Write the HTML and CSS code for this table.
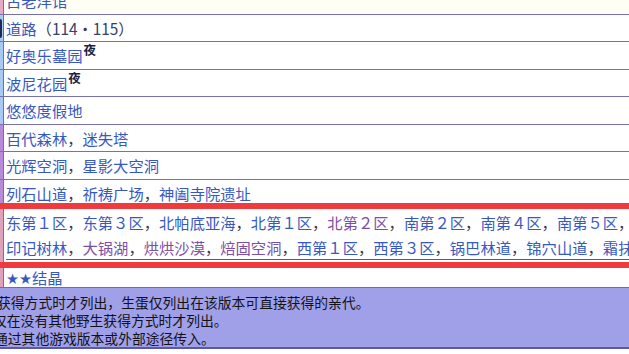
FILE: index.html
```html
<!DOCTYPE html>
<html lang="zh">
<head>
<meta charset="utf-8">
<title>地点</title>
<link rel="stylesheet" href="styles.css">
</head>
<body>
<div class="page">
  <div class="table">
    <div class="row row-top">
      <div class="strip strip-pink"></div>
      <div class="cell"><a class="lk">古老洋馆</a></div>
    </div>
    <div class="row">
      <div class="strip strip-blue"><div class="mark"></div></div>
      <div class="cell"><a class="lk">道路</a><span class="plain">（</span><a class="lk num">114</a><span class="plain">・</span><a class="lk num">115</a><span class="plain">）</span></div>
    </div>
    <div class="row">
      <div class="strip strip-blue"></div>
      <div class="cell"><a class="lk">好奥乐墓园</a><sup class="night">夜</sup></div>
    </div>
    <div class="row">
      <div class="strip strip-blue"></div>
      <div class="cell"><a class="lk">波尼花园</a><sup class="night">夜</sup></div>
    </div>
    <div class="row">
      <div class="strip strip-blue"></div>
      <div class="cell"><a class="lk">悠悠度假地</a></div>
    </div>
    <div class="row">
      <div class="strip strip-purple"></div>
      <div class="cell"><a class="lk">百代森林</a><span class="sep">，</span><a class="lk">迷失塔</a></div>
    </div>
    <div class="row">
      <div class="strip strip-purple"></div>
      <div class="cell"><a class="lk">光辉空洞</a><span class="sep">，</span><a class="lk">星影大空洞</a></div>
    </div>
    <div class="row row-short">
      <div class="strip strip-purple"></div>
      <div class="cell"><a class="lk">列石山道</a><span class="sep">，</span><a class="lk">祈祷广场</a><span class="sep">，</span><a class="lk">神阖寺院遗址</a></div>
    </div>
    <div class="highlight">
      <div class="row row-hl">
        <div class="strip strip-rose"></div>
        <div class="cell cell-hl">
          <div class="lines">
            <div class="line"><a class="lk">东第１区</a><span class="sep">，</span><a class="lk">东第３区</a><span class="sep">，</span><a class="lk">北帕底亚海</a><span class="sep">，</span><a class="lk">北第１区</a><span class="sep">，</span><a class="lk vis">北第２区</a><span class="sep">，</span><a class="lk">南第２区</a><span class="sep">，</span><a class="lk">南第４区</a><span class="sep">，</span><a class="lk">南第５区</a><span class="sep">，</span></div>
            <div class="line"><a class="lk">印记树林</a><span class="sep">，</span><a class="lk vis">大锅湖</a><span class="sep">，</span><a class="lk vis">烘烘沙漠</a><span class="sep">，</span><a class="lk vis">焙固空洞</a><span class="sep">，</span><a class="lk">西第１区</a><span class="sep">，</span><a class="lk">西第３区</a><span class="sep">，</span><a class="lk">锅巴林道</a><span class="sep">，</span><a class="lk">锦穴山道</a><span class="sep">，</span><a class="lk">霜抹山</a></div>
          </div>
        </div>
      </div>
    </div>
    <div class="row row-star">
      <div class="strip strip-rose"></div>
      <div class="cell"><a class="lk"><span class="stars">★★</span>结晶</a></div>
    </div>
  </div>
  <div class="footer">
    <div class="note note-1">获得方式时才列出，生蛋仅列出在该版本可直接获得的亲代。</div>
    <div class="note note-2">仅在没有其他野生获得方式时才列出。</div>
    <div class="note note-3">通过其他游戏版本或外部途径传入。</div>
  </div>
</div>
</body>
</html>
```
FILE: styles.css
```css
html, body {
  margin: 0;
  padding: 0;
  background: #ffffff;
  overflow: hidden;
}
body {
  width: 629px;
  height: 354px;
  font-family: "Noto Sans CJK SC", "Noto Sans", sans-serif;
}
.page {
  width: 629px;
  overflow: hidden;
}
.table {
  margin-top: -13px;
  display: flex;
  flex-direction: column;
}
.row {
  display: flex;
  height: 27.5px;
  box-sizing: border-box;
  border-bottom: 1px solid #7771b1;
  background: #ffffff;
}
.row-top {
  background: #fffef4;
}
.row-short {
  height: 23.5px;
  border-bottom: none;
}
.strip {
  width: 3px;
  flex: none;
  border-right: 1px solid #6a6fb6;
}
.strip-pink { background: #e4abc6; }
.strip-blue { background: #a7c9f4; }
.strip-purple { background: #b98ad7; }
.strip-rose { background: #dea3ba; }
.mark {
  width: 2px;
  height: 19px;
  margin-top: 4px;
  background: #1d2a52;
  border-radius: 0 2px 2px 0;
}
.cell {
  flex: 1;
  padding-left: 2px;
  font-size: 15.3px;
  line-height: 26.5px;
  white-space: nowrap;
  overflow: hidden;
  color: #333;
}
.lk {
  color: #3759bf;
  text-decoration: none;
}
.lk.vis {
  color: #7d4ea6;
}
.lk.num {
  color: #33406a;
}
.plain, .sep {
  color: #3a3a4a;
}
.night {
  font-size: 12.5px;
  font-weight: 700;
  color: #1b2140;
  vertical-align: 7px;
  line-height: 0;
  margin-left: 1px;
}
.highlight {
  border-top: 6px solid #ef3b3d;
  border-bottom: 6px solid #ef3b3d;
}
.row-hl {
  height: auto;
  border-bottom: none;
}
.cell-hl {
  padding-bottom: 2px;
}
.lines {
  padding-top: 1px;
  border-bottom: 1px solid #4556b6;
}
.line {
  height: 24.5px;
  line-height: 24.5px;
}
.row-star {
  height: 20px;
  border-bottom: 1px solid #6c6ab0;
}
.row-star .cell {
  line-height: 18px;
}
.stars {
  font-family: "DejaVu Sans", sans-serif;
  font-size: 14.5px;
}
.footer {
  background: #a0a0e9;
  border-bottom: 2px solid #5a59a2;
  padding-top: 5px;
  font-size: 13.8px;
  line-height: 18px;
  color: #121218;
  overflow: hidden;
}
.note {
  white-space: nowrap;
}
.note-1 { margin-left: -3px; }
.note-2 { margin-left: -7px; }
.note-3 { margin-left: -6px; }
```
